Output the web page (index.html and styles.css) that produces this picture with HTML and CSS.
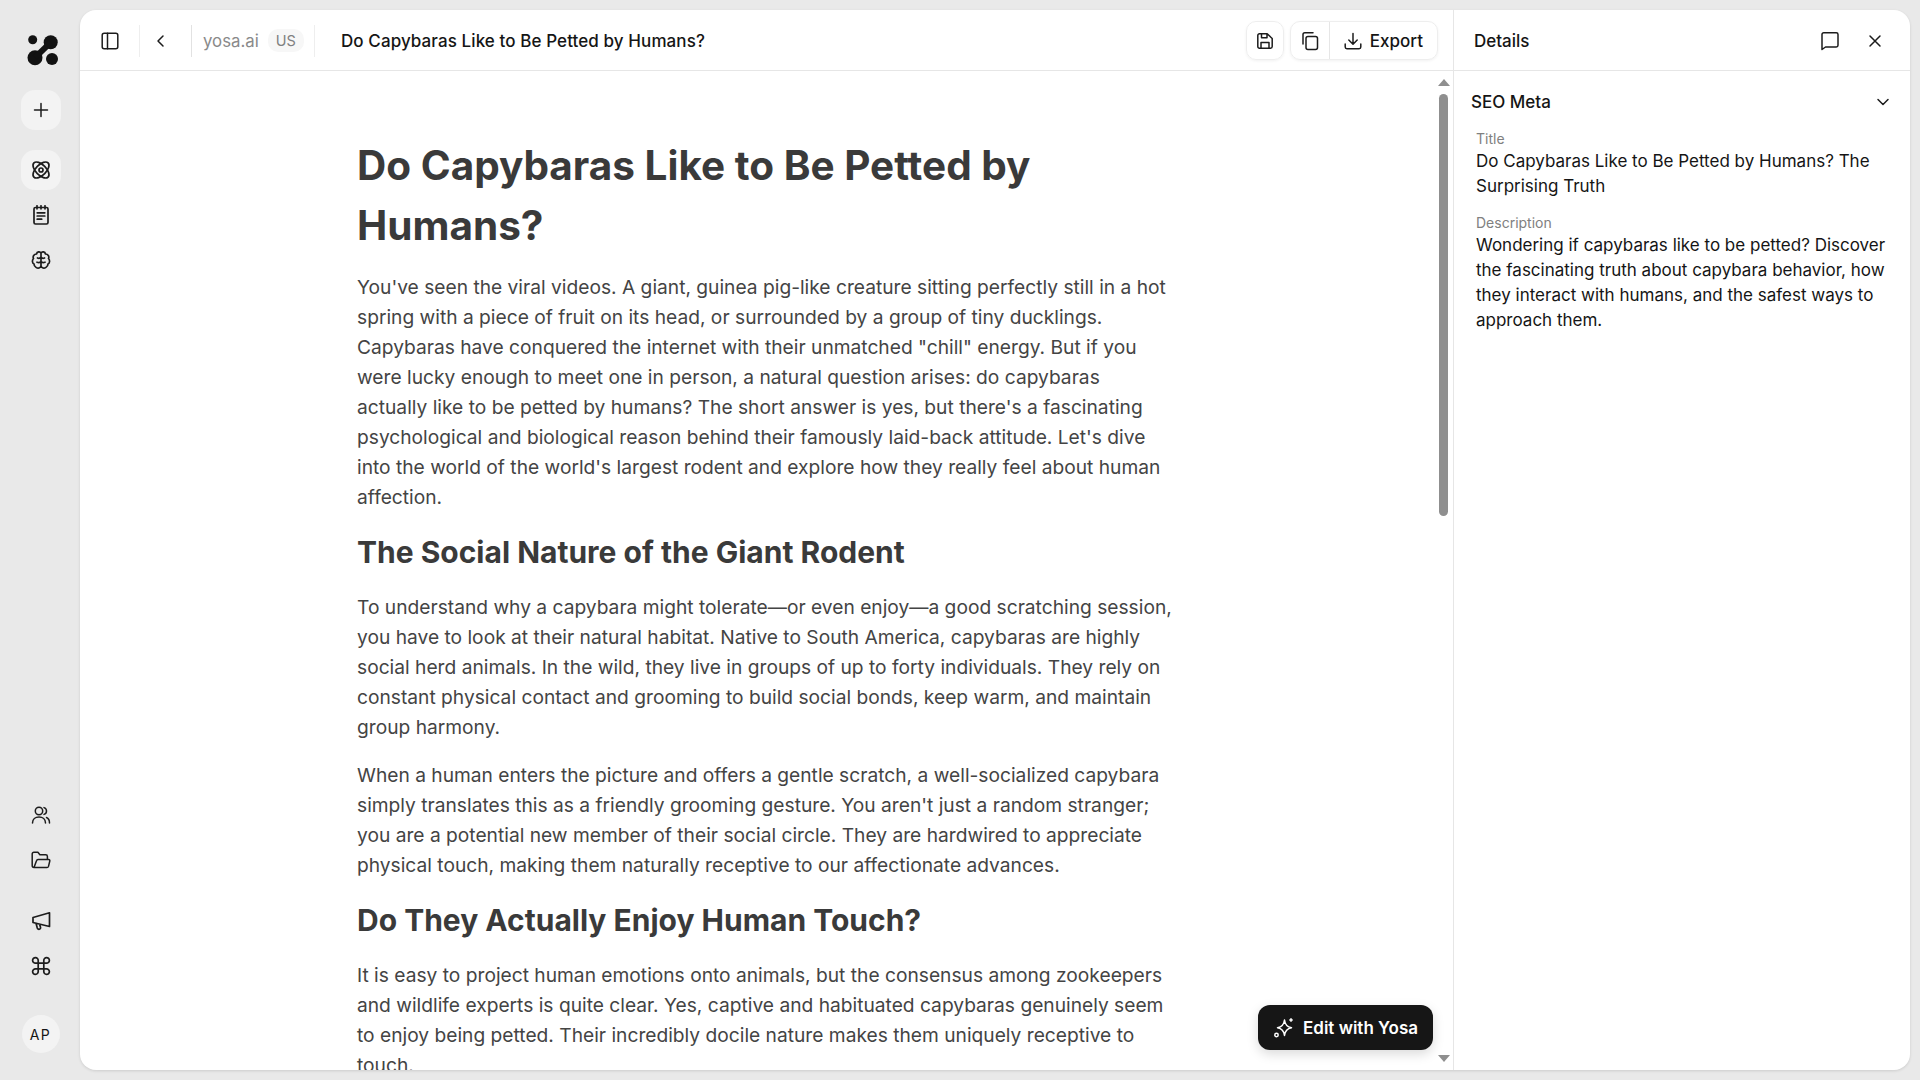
FILE: index.html
```html
<!DOCTYPE html>
<html lang="en">
<head>
    <meta charset="UTF-8">
    <title>Do Capybaras Like to Be Petted by Humans?</title>
    <link rel="stylesheet" href="styles.css">
</head>
<body>
<div class="app">
    <nav class="rail">
        <svg class="logo" width="32" height="32" viewBox="0 0 32 32" fill="#121212">
            <circle cx="5.700" cy="5.700" r="4.500"/>
            <circle cx="23.700" cy="8.300" r="7"/>
            <circle cx="8" cy="23.700" r="7.500"/>
            <circle cx="25" cy="25" r="6"/>
            <path d="M8 23.700 23.700 8.300" stroke="#121212" stroke-width="6"/>
        </svg>
        <button class="rail-btn rail-plain-bg rail-add">
            <svg class="ic" width="18" height="18" viewBox="0 0 18 18"><path d="M9 2.500v13M2.500 9h13"/></svg>
        </button>
        <button class="rail-btn rail-plain-bg">
            <svg class="ic ic-rail" width="20" height="20" viewBox="0 0 20 20"><circle cx="10" cy="10" r="2"/><ellipse cx="10" cy="10" rx="10" ry="5.200" transform="rotate(45 10 10)"/><ellipse cx="10" cy="10" rx="10" ry="5.200" transform="rotate(-45 10 10)"/></svg>
        </button>
        <button class="rail-btn">
            <svg class="ic ic-rail" width="20" height="20" viewBox="0 0 20 20"><rect x="3" y="2.500" width="14" height="16.500" rx="1.500"/><path d="M6 .8v3M10 .8v3M14 .8v3M6.200 7.800h7.600M6.200 11h7.600M6.200 14.200h4.500"/></svg>
        </button>
        <button class="rail-btn">
            <svg class="ic ic-rail" width="20" height="20" viewBox="0 0 20 20"><path d="M10 3C9 1.300 6 1.500 5.500 4 3 4 1.500 6.500 2.500 8.500 1 10 1 13 3 14 3 17 6.500 18.800 8.500 17.800 9.500 17.300 10 16.500 10 15.500ZM10 3C11 1.300 14 1.500 14.500 4 17 4 18.500 6.500 17.500 8.500 19 10 19 13 17 14 17 17 13.500 18.800 11.500 17.800 10.500 17.300 10 16.500 10 15.500ZM10 7C9 8.500 7.500 8.500 6.500 8M10 7C11 8.500 12.500 8.500 13.500 8M10 11.500C9 12.800 7.500 12.800 6 12.200M10 11.500C11 12.800 12.500 12.800 14 12.200"/></svg>
        </button>
        <div class="rail-spacer"></div>
        <button class="rail-btn">
            <svg class="ic" width="20" height="20" viewBox="0 0 20 20"><circle cx="8" cy="6" r="3.700"/><path d="M1.500 18c0-3.800 2.800-6 6.500-6s6.500 2.200 6.500 6M13 2.600c1.500.4 2.500 1.800 2.500 3.400s-1 3-2.500 3.400M15.500 12.500c1.900.8 3 2.800 3 5.500"/></svg>
        </button>
        <button class="rail-btn">
            <svg class="ic" width="20" height="20" viewBox="0 0 20 20"><path d="M3 17.500h13c.8 0 1.300-.4 1.500-1.100l1.300-5.400c.2-.8-.3-1.500-1.100-1.500H7c-.7 0-1.200.4-1.400 1L3 17.500c-1 0-1.800-.7-1.800-1.700V4c0-1 .7-1.700 1.700-1.700h4l2 2.500h5.800c1 0 1.700.7 1.700 1.700v3"/></svg>
        </button>
        <button class="rail-btn rail-group">
            <svg class="ic ic-rail" width="20" height="20" viewBox="0 0 20 20"><path d="M18.500 1.800v13.700L2 11.500V6.500ZM5 12.200l1.300 4.800c.3 1 1.200 1.500 2.100 1.200s1.400-1.100 1.100-2L8.500 13"/></svg>
        </button>
        <button class="rail-btn">
            <svg class="ic ic-rail" width="20" height="20" viewBox="0 0 20 20"><path d="M7.200 7.200h5.600v5.600H7.200zM7.200 7.200H4.600A2.800 2.800 0 1 1 7.200 4.600zM12.800 7.200V4.600A2.800 2.800 0 1 1 15.400 7.200zM12.800 12.800h2.600A2.800 2.800 0 1 1 12.800 15.400zM7.200 12.800v2.600A2.800 2.800 0 1 1 4.600 12.800z"/></svg>
        </button>
        <div class="avatar">AP</div>
    </nav>

    <div class="card">
        <main class="doc">
            <header class="topbar">
                <button class="tool tool-panel">
                    <svg class="ic" width="18" height="18" viewBox="0 0 18 18"><rect x="1.200" y="1.200" width="15.600" height="15.600" rx="2"/><path d="M6.500 1.200v15.600"/></svg>
                </button>
                <button class="tool tool-back">
                    <svg class="ic" width="16" height="16" viewBox="0 0 16 16"><path d="M10 3 5 8l5 5"/></svg>
                </button>
                <div class="crumb">
                    <span class="crumb-site">yosa.ai</span>
                    <span class="crumb-tag">US</span>
                </div>
                <div class="doc-name">Do Capybaras Like to Be Petted by Humans?</div>
                <div class="actions">
                    <button class="act-btn">
                        <svg class="ic" width="18" height="18" viewBox="0 0 18 18"><path d="M1.800 3.500c0-1 .7-1.700 1.700-1.700h7.700l5 4.700v8c0 1-.7 1.700-1.700 1.700h-11c-1 0-1.700-.7-1.700-1.700zM5.500 1.800v4h5.500V2M5 16.200v-5.700h8v5.700"/></svg>
                    </button>
                    <div class="act-group">
                        <button class="act-btn-inner">
                            <svg class="ic" width="20" height="20" viewBox="0 0 20 20"><rect x="6" y="5.500" width="11.500" height="13" rx="2"/><path d="M3 13V3.500C3 2.400 3.700 1.700 4.800 1.700H13"/></svg>
                        </button>
                        <button class="act-export">
                            <svg class="ic" width="18" height="18" viewBox="0 0 18 18"><path d="M9 1.500V12M4.800 8 9 12.200 13.200 8M1.200 12v3c0 1 .7 1.700 1.700 1.700h12.200c1 0 1.700-.7 1.700-1.700v-3"/></svg>
                            Export
                        </button>
                    </div>
                </div>
            </header>
            <div class="doc-body">
                <article class="article">
                    <h1>Do Capybaras Like to Be Petted by Humans?</h1>
                    <p>You've seen the viral videos. A giant, guinea pig-like creature sitting perfectly still in a hot spring with a piece of fruit on its head, or surrounded by a group of tiny ducklings. Capybaras have conquered the internet with their unmatched "chill" energy. But if you were lucky enough to meet one in person, a natural question arises: do capybaras actually like to be petted by humans? The short answer is yes, but there's a fascinating psychological and biological reason behind their famously laid-back attitude. Let's dive into the world of the world's largest rodent and explore how they really feel about human affection.</p>
                    <h2>The Social Nature of the Giant Rodent</h2>
                    <p>To understand why a capybara might tolerate—or even enjoy—a good scratching session, you have to look at their natural habitat. Native to South America, capybaras are highly social herd animals. In the wild, they live in groups of up to forty individuals. They rely on constant physical contact and grooming to build social bonds, keep warm, and maintain group harmony.</p>
                    <p>When a human enters the picture and offers a gentle scratch, a well-socialized capybara simply translates this as a friendly grooming gesture. You aren't just a random stranger; you are a potential new member of their social circle. They are hardwired to appreciate physical touch, making them naturally receptive to our affectionate advances.</p>
                    <h2>Do They Actually Enjoy Human Touch?</h2>
                    <p>It is easy to project human emotions onto animals, but the consensus among zookeepers and wildlife experts is quite clear. Yes, captive and habituated capybaras genuinely seem to enjoy being petted. Their incredibly docile nature makes them uniquely receptive to touch.</p>
                </article>
                <div class="scrollbar">
                    <span class="arrow-up"></span>
                    <span class="thumb"></span>
                    <span class="track"></span>
                    <span class="arrow-down"></span>
                </div>
                <button class="edit-btn">
                    <svg class="ic ic-light" width="22" height="22" viewBox="0 0 22 22"><path d="M11.500 3c.6 5 2.500 7 7 7.700-4.500.7-6.400 2.700-7 7.800-.6-5.100-2.500-7.100-7-7.800 4.500-.7 6.400-2.700 7-7.700z"/><path d="M18 1.800v2.400M16.800 3h2.400"/><circle cx="3.500" cy="18" r="1.700"/></svg>
                    Edit with Yosa
                </button>
            </div>
        </main>

        <aside class="details">
            <header class="details-head">
                <span class="details-title">Details</span>
                <svg class="ic details-comment" width="20" height="20" viewBox="0 0 20 20"><path d="M2 3.500C2 2.500 2.700 1.800 3.700 1.800h12.600c1 0 1.700.7 1.700 1.700v10.800c0 1-.7 1.700-1.700 1.700H5.500L2 18.500z"/></svg>
                <svg class="ic details-close" width="16" height="16" viewBox="0 0 16 16"><path d="M3 3l10 10M13 3 3 13"/></svg>
            </header>
            <section class="seo">
                <div class="seo-head">
                    <span>SEO Meta</span>
                    <svg class="ic" width="16" height="16" viewBox="0 0 16 16"><path d="M3 5.500 8 10.500l5-5"/></svg>
                </div>
                <div class="field">
                    <div class="field-label">Title</div>
                    <div class="field-value">Do Capybaras Like to Be Petted by Humans? The Surprising Truth</div>
                </div>
                <div class="field">
                    <div class="field-label">Description</div>
                    <div class="field-value">Wondering if capybaras like to be petted? Discover the fascinating truth about capybara behavior, how they interact with humans, and the safest ways to approach them.</div>
                </div>
            </section>
        </aside>
    </div>
</div>
</body>
</html>
```

FILE: styles.css
```css
* {
    box-sizing: border-box;
}
body {
    font-family: Inter, "Liberation Sans", sans-serif;
    background-color: #e9e9e9;
    margin: 0;
    height: 100vh;
    overflow: hidden;
    color: #151515;
}
button {
    font: inherit;
    color: inherit;
    border: none;
    background: none;
    padding: 0;
}
.ic {
    fill: none;
    stroke: #1c1c1c;
    stroke-width: 1.5;
    stroke-linecap: round;
    stroke-linejoin: round;
    flex: none;
}
.ic-rail {
    stroke-width: 1.7;
}
.ic-light {
    stroke: #fff;
}
.app {
    display: flex;
    height: 100%;
    padding: 10px 10px 10px 0;
}

/* left rail */
.rail {
    width: 80px;
    flex: none;
    display: flex;
    flex-direction: column;
    align-items: center;
    padding: 24px 0 0 1px;
}
.logo {
    margin-left: 5px;
    flex: none;
}
.rail-btn {
    width: 40px;
    height: 40px;
    border-radius: 14px;
    margin-bottom: 5px;
    display: flex;
    align-items: center;
    justify-content: center;
}
.rail-plain-bg {
    background: #f3f3f3;
}
.rail-add {
    margin-top: 24px;
    margin-bottom: 20px;
}
.rail-spacer {
    flex: 1;
}
.rail-group {
    margin-top: 16px;
}
.avatar {
    width: 38px;
    height: 38px;
    border-radius: 50%;
    background: #f3f3f3;
    font-size: 14px;
    letter-spacing: 1.500px;
    display: flex;
    align-items: center;
    justify-content: center;
    margin: 24px 0 17px;
}

/* white card */
.card {
    flex: 1;
    display: flex;
    min-width: 0;
    background: #fff;
    border-radius: 16px;
    overflow: hidden;
    box-shadow: 0 1px 3px rgba(0, 0, 0, 0.12);
}
.doc {
    flex: 1;
    min-width: 0;
    display: flex;
    flex-direction: column;
}
.topbar {
    height: 61px;
    flex: none;
    padding-top: 1px;
    border-bottom: 1px solid #e6e6e6;
    display: flex;
    align-items: center;
}
.tool {
    height: 32px;
    display: flex;
    align-items: center;
    justify-content: center;
    border-right: 1px solid #eee;
}
.tool-panel {
    width: 60px;
}
.tool-back {
    width: 52px;
    padding-right: 10px;
    border-right-color: #e2e2e2;
}
.crumb {
    height: 32px;
    display: flex;
    align-items: center;
    width: 123px;
    padding-left: 11px;
    border-right: 1px solid #eee;
}
.crumb-site {
    font-size: 16.800px;
    color: #8a8a8a;
}
.crumb-tag {
    font-size: 14.500px;
    color: #808080;
    background: #f7f7f7;
    border-radius: 10px;
    padding: 3px 8px;
    margin-left: 9px;
}
.doc-name {
    font-size: 17px;
    font-weight: 500;
    letter-spacing: 0.09px;
    margin-left: 26px;
}
.actions {
    margin-left: auto;
    margin-right: 15px;
    display: flex;
    gap: 6px;
}
.act-btn,
.act-group {
    height: 39px;
    border-radius: 10px;
    border: 1px solid #eee;
    box-shadow: 0 1px 3px rgba(0, 0, 0, 0.06);
    display: flex;
    align-items: center;
}
.act-btn {
    width: 38px;
    justify-content: center;
}
.act-btn-inner {
    width: 39px;
    height: 100%;
    display: flex;
    align-items: center;
    justify-content: center;
    border-right: 1px solid #e6e6e6;
}
.act-export {
    display: flex;
    align-items: center;
    gap: 8px;
    padding: 0 14px;
    font-size: 17px;
    font-weight: 500;
}

/* document */
.doc-body {
    flex: 1;
    min-height: 0;
    display: flex;
    position: relative;
    overflow: hidden;
}
.article {
    flex: 1;
    min-width: 0;
    padding: 65px 0 0 277px;
    color: #444;
}
.article h1,
.article h2,
.article p {
    width: 816px;
    margin: 0;
}
.article h1 {
    font-size: 40.500px;
    line-height: 60px;
    font-weight: 700;
    color: #3a3a3a;
    margin-bottom: 16px;
}
.article h2 {
    font-size: 30px;
    line-height: 42px;
    font-weight: 700;
    color: #3a3a3a;
    margin: 19px 0 19px;
}
.article p {
    font-size: 19.200px;
    line-height: 30px;
    margin-bottom: 18px;
}
.scrollbar {
    width: 17px;
    flex: none;
    margin-right: 1px;
    display: flex;
    flex-direction: column;
    align-items: center;
    padding: 8px 0;
}
.arrow-up,
.arrow-down {
    width: 0;
    height: 0;
    border-left: 6px solid transparent;
    border-right: 6px solid transparent;
}
.arrow-up {
    border-bottom: 7px solid #8f8f8f;
}
.arrow-down {
    border-top: 7px solid #8f8f8f;
}
.thumb {
    width: 9px;
    height: 422px;
    background: #8f8f8f;
    border-radius: 5px;
    margin-top: 8px;
}
.track {
    flex: 1;
}
.edit-btn {
    position: absolute;
    right: 20px;
    bottom: 20px;
    height: 45px;
    padding: 0 15px;
    background: #161616;
    color: #fff;
    border-radius: 12px;
    display: flex;
    align-items: center;
    gap: 8px;
    font-size: 17px;
    font-weight: 600;
    box-shadow: 0 4px 12px rgba(0, 0, 0, 0.15);
}

/* details panel */
.details {
    width: 457px;
    flex: none;
    border-left: 1px solid #e6e6e6;
}
.details-head {
    height: 61px;
    padding: 1px 27px 0 20px;
    border-bottom: 1px solid #e6e6e6;
    display: flex;
    align-items: center;
    font-size: 17px;
    font-weight: 500;
}
.details-title {
    flex: 1;
}
.details-close {
    margin-left: 27px;
}
.seo {
    padding: 0 19px 0 17px;
}
.seo-head {
    display: flex;
    align-items: center;
    justify-content: space-between;
    font-size: 17px;
    font-weight: 500;
    margin-top: 18px;
    height: 26px;
}
.field {
    padding-left: 5px;
    margin-top: 14px;
}
.field-label {
    font-size: 14px;
    line-height: 20px;
    color: #808080;
}
.field-value {
    font-size: 17px;
    line-height: 25px;
}
```
